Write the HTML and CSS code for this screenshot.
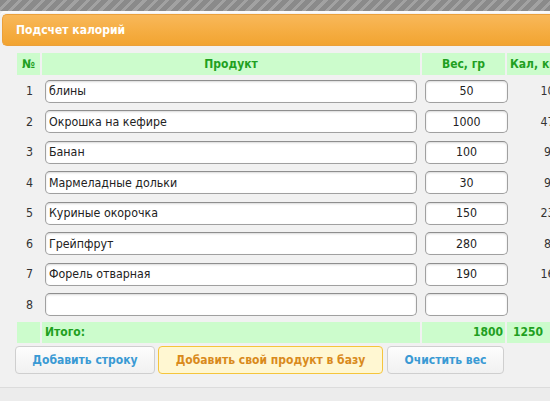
FILE: index.html
```html
<!DOCTYPE html>
<html lang="ru">
<head>
<meta charset="utf-8">
<title>Подсчет калорий</title>
<link rel="stylesheet" href="styles.css">
</head>
<body>
<div class="stripes"></div>
<div class="panel">
  <div class="title">Подсчет калорий</div>
  <div class="calc">
    <div class="row head">
      <div class="c">№</div>
      <div class="c">Продукт</div>
      <div class="c">Вес, гр</div>
      <div class="c kal">Кал, ккал</div>
    </div>
    <div class="row data"><div class="num">1</div><div class="cell"><input class="name" value="блины"></div><div class="cell"><input class="wt" value="50"></div><div class="kv">105</div></div>
    <div class="row data"><div class="num">2</div><div class="cell"><input class="name" value="Окрошка на кефире"></div><div class="cell"><input class="wt" value="1000"></div><div class="kv">470</div></div>
    <div class="row data"><div class="num">3</div><div class="cell"><input class="name" value="Банан"></div><div class="cell"><input class="wt" value="100"></div><div class="kv">96</div></div>
    <div class="row data"><div class="num">4</div><div class="cell"><input class="name" value="Мармеладные дольки"></div><div class="cell"><input class="wt" value="30"></div><div class="kv">96</div></div>
    <div class="row data"><div class="num">5</div><div class="cell"><input class="name" value="Куриные окорочка"></div><div class="cell"><input class="wt" value="150"></div><div class="kv">237</div></div>
    <div class="row data"><div class="num">6</div><div class="cell"><input class="name" value="Грейпфрут"></div><div class="cell"><input class="wt" value="280"></div><div class="kv">81</div></div>
    <div class="row data"><div class="num">7</div><div class="cell"><input class="name" value="Форель отварная"></div><div class="cell"><input class="wt" value="190"></div><div class="kv">165</div></div>
    <div class="row data"><div class="num">8</div><div class="cell"><input class="name" value=""></div><div class="cell"><input class="wt" value=""></div><div class="kv"></div></div>
    <div class="row total">
      <div class="c"></div>
      <div class="c t-label">Итого:</div>
      <div class="c t-num">1800</div>
      <div class="c t-kal">1250</div>
    </div>
    <div class="buttons">
      <button class="btn b1">Добавить строку</button>
      <button class="btn b2">Добавить свой продукт в базу</button>
      <button class="btn b3">Очистить вес</button>
    </div>
  </div>
</div>
<div class="below"></div>
</body>
</html>
```
FILE: styles.css
```css
html, body {
  margin: 0;
  padding: 0;
}
body {
  width: 550px;
  height: 401px;
  overflow: hidden;
  background: #ececec;
  font-family: "DejaVu Sans Condensed", "DejaVu Sans", Verdana, sans-serif;
  font-size: 12.3px;
  color: #333;
}
.stripes {
  height: 11px;
  background: repeating-linear-gradient(135deg, #8a8a8a 0 5px, #a2a2a2 5px 8px);
}
.panel {
  background: #f1f1f1;
  border-top: 2px solid #fafafa;
  border-top-left-radius: 5px;
  border-bottom: 1px solid #dcdcdc;
  padding: 1px 0 13px 2px;
}
.title {
  height: 32px;
  box-sizing: border-box;
  background: linear-gradient(#f8b85a, #f5ad42 55%, #f2a431);
  border: 1px solid #eba03a;
  border-right: none;
  border-radius: 5px 0 0 5px;
  color: #fff;
  font-weight: bold;
  font-size: 12px;
  line-height: 30px;
  padding-left: 13px;
  white-space: nowrap;
}
.calc {
  padding: 7px 0 0 15px;
}
.row {
  display: grid;
  grid-template-columns: 23px 378px 83px 86px;
  column-gap: 2px;
  white-space: nowrap;
}
.head {
  height: 22px;
  margin-bottom: 1px;
}
.head .c, .total .c {
  background: #ccfccc;
  color: #1fa01f;
  font-weight: bold;
  font-size: 12px;
  line-height: 22px;
  text-align: center;
}
.head .kal {
  text-align: left;
  padding-left: 3px;
}
.data {
  height: 30.5px;
  align-items: center;
}
.num {
  text-align: center;
  padding-left: 2px;
}
.cell {
  display: flex;
}
input {
  font: inherit;
  color: #222;
  height: 23px;
  box-sizing: border-box;
  border: 1px solid #a0a0a0;
  border-top-color: #8e8e8e;
  border-radius: 5px;
  background: #fff;
  box-shadow: inset 0 1px 2px rgba(0,0,0,0.15);
  margin: 0;
  outline: none;
}
.name {
  margin-left: 3px;
  width: 372px;
  padding: 0 3px;
}
.wt {
  margin-left: 3px;
  width: 83px;
  text-align: center;
  padding: 0;
}
.kv {
  text-align: center;
  padding-left: 2px;
}
.total {
  height: 21px;
  margin-top: 2px;
}
.total .c {
  line-height: 21px;
}
.t-label {
  text-align: left !important;
  padding-left: 3px;
}
.t-num {
  text-align: right !important;
  padding-right: 2px;
}
.t-kal {
  text-align: left !important;
  padding-left: 6px;
}
.buttons {
  display: flex;
  gap: 3px;
  margin-top: 3px;
  margin-left: -2px;
}
.btn {
  height: 28px;
  box-sizing: border-box;
  font-family: inherit;
  font-size: 12px;
  font-weight: bold;
  white-space: nowrap;
  border-radius: 4px;
  padding: 0;
  border: 1px solid #cfcfcf;
  background: linear-gradient(#fdfdfd, #f1f1f1);
  color: #3a9ad4;
}
.b1 { width: 140px; }
.b2 {
  width: 225px;
  background: #fff7d2;
  border-color: #f5c53c;
  color: #d98a1c;
}
.b3 { width: 117px; margin-left: 1px; }
```
